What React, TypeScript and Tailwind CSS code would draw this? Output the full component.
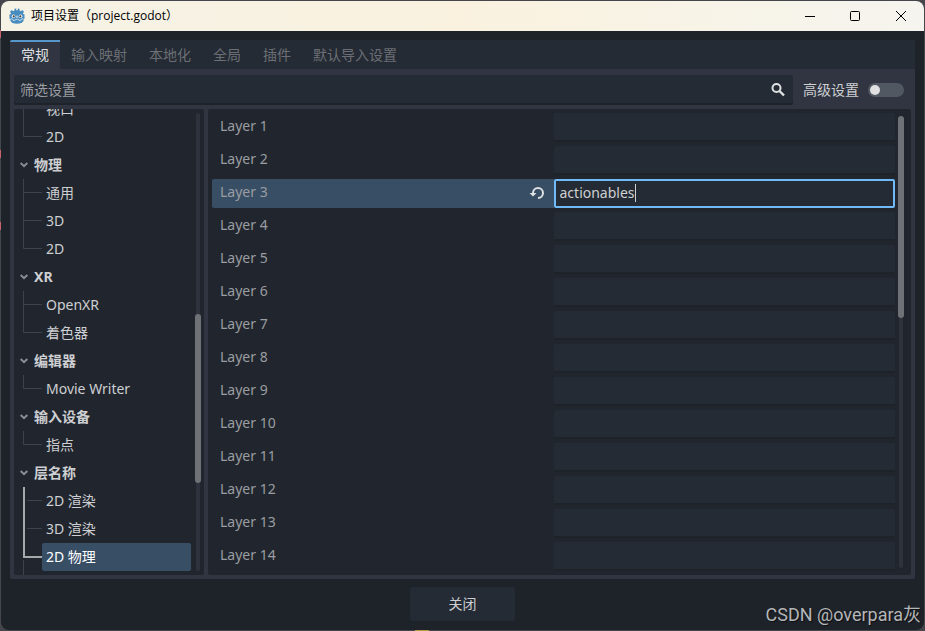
import { useState } from "react";
import type { ReactElement } from "react";
import { clsx } from "clsx";

interface TreeGroup {
  name: string;
  items: string[];
  // The guide line runs on below the last item
  continues?: boolean;
}

const TABS = ["常规", "输入映射", "本地化", "全局", "插件", "默认导入设置"];

const GROUPS: TreeGroup[] = [
  { name: "", items: ["视口", "2D"] },
  { name: "物理", items: ["通用", "3D", "2D"] },
  { name: "XR", items: ["OpenXR", "着色器"] },
  { name: "编辑器", items: ["Movie Writer"] },
  { name: "输入设备", items: ["指点"] },
  { name: "层名称", items: ["2D 渲染", "3D 渲染", "2D 物理"], continues: true },
];

const LAYERS = Array.from({ length: 14 }, (_, i) => `Layer ${i + 1}`);
const ACTIVE_LAYER = 2;

function GodotLogo(): ReactElement {
  return (
    <svg width="16" height="16" viewBox="0 0 16 16" aria-hidden="true">
      <path
        fill="#478cbf"
        d="M5.600.8 7.200.4v1.900h1.600V.4l1.600.4.4 1.900 1 .6 1.500-1.200 1.700 1.700-1 1.500.4.9H15.500v4.500l-.8.3v1.200c-.5 2.400-3.300 3.600-6.700 3.600s-6.200-1.200-6.700-3.600v-1.200l-.8-.3V6.200H1.600l.4-.9L1 3.800l1.700-1.700 1.500 1.200 1-.6z"
      />
      <circle cx="4.500" cy="8.200" r="1.800" fill="#fff" />
      <circle cx="11.500" cy="8.200" r="1.800" fill="#fff" />
      <circle cx="4.700" cy="8.300" r="1.100" fill="#414042" />
      <circle cx="11.300" cy="8.300" r="1.100" fill="#414042" />
      <path stroke="#fff" strokeLinecap="round" d="M8 8v1.500" />
      <path fill="none" stroke="#d6e5f0" strokeWidth=".8" d="M1.300 11h2.400l.4 1.400h2l.4-1.100h3l.4 1.100h2l.4-1.400h2.400" />
    </svg>
  );
}

function TitleBar(): ReactElement {
  return (
    <header className="flex h-[30px] shrink-0 items-center bg-linear-to-r from-[#f5f2e6] via-[#faf2df] to-[#f5f4ee] pl-2 text-black">
      <GodotLogo />
      <h1 className="ml-1.5 flex-1 font-['Open_Sans','Noto_Sans_CJK_SC',sans-serif] text-xs">项目设置（project.godot）</h1>
      <button type="button" aria-label="最小化" className="flex h-full w-11 items-center justify-center">
        <svg width="10" height="10" stroke="currentColor"><path d="M0 5.500h10" /></svg>
      </button>
      <button type="button" aria-label="最大化" className="flex h-full w-[46px] items-center justify-center">
        <svg width="10" height="10" fill="none" stroke="currentColor"><rect x=".5" y=".5" width="9" height="9" rx="1" /></svg>
      </button>
      <button type="button" aria-label="关闭窗口" className="flex h-full w-[46px] items-center justify-center">
        <svg width="10" height="10" stroke="currentColor"><path d="m0 0 10 10M10 0 0 10" /></svg>
      </button>
    </header>
  );
}

interface TreeProps {
  selected: string;
  onSelect: (key: string) => void;
}

// Section tree. The guide line to the selected item is drawn thick.
function SectionTree({ selected, onSelect }: TreeProps): ReactElement {
  return (
    <nav className="min-w-0 flex-1 overflow-hidden">
      <div className="-mt-3.5">
        {GROUPS.map((group) => {
          const active = group.items.findIndex((item) => `${group.name}/${item}` === selected);
          return (
            <section key={group.name}>
              {group.name && (
                <button type="button" className="flex h-7 w-full items-center pl-1.5 font-bold text-[#cdcfd2]">
                  <svg width="8" height="6" fill="none" stroke="#8a8d91" strokeWidth="2" aria-hidden="true">
                    <path d="M.7 1 4 4.200 7.300 1" />
                  </svg>
                  <span className="ml-1.5">{group.name}</span>
                </button>
              )}
              <ul>
                {group.items.map((item, i) => {
                  const last = i === group.items.length - 1;
                  return (
                    <li key={item} className="flex h-7 pl-[9px]">
                      <svg width="19" height="28" className="shrink-0" aria-hidden="true">
                        {i > active && (
                          <path d={last ? "M.5 0V13.500H19" : "M.5 0V28M.5 13.500H19"} fill="none" stroke="#3e434b" />
                        )}
                        {i < active && <path d="M4 13.500H19" stroke="#3e434b" />}
                        {i < active && <path d="M1 0V28" stroke="#a6a9ac" strokeWidth="2" />}
                        {i === active && <path d="M1 0V14H19" fill="none" stroke="#a6a9ac" strokeWidth="2" />}
                        {i === active && group.continues && <path d="M.5 17V28" stroke="#3e434b" />}
                      </svg>
                      <button
                        type="button"
                        onClick={() => onSelect(`${group.name}/${item}`)}
                        className={clsx(
                          "flex-1 rounded-xs px-1 text-left",
                          i === active ? "bg-[#384e65] text-white" : "text-[#cdcfd2]"
                        )}
                      >
                        {item}
                      </button>
                    </li>
                  );
                })}
              </ul>
              {group.continues && <div className="ml-[9px] h-7 border-l border-[#3e434b]" />}
            </section>
          );
        })}
      </div>
    </nav>
  );
}

function LayerRow({ label, active }: { label: string; active: boolean }): ReactElement {
  const [value, setValue] = useState(active ? "actionables" : "");
  return (
    <div className="flex h-[29px] shrink-0">
      <label
        htmlFor={label}
        className={clsx("flex w-1/2 items-center rounded-l-xs pb-1 pl-2 text-[#9a9da1]", active && "bg-[#384e65]")}
      >
        {label}
      </label>
      <div className="relative flex w-1/2">
        {active && (
          <button type="button" aria-label="重置" className="absolute right-full top-1.5 mr-[9px]">
            <svg width="16" height="16" viewBox="0 0 16 16" aria-hidden="true">
              <path fill="#dfe1e3" d="M9 2a6 6 0 0 0-6 6H.5L4 11.500 7.500 8H5a4 4 0 1 1 4 4v2A6 6 0 0 0 9 2z" />
            </svg>
          </button>
        )}
        <input
          id={label}
          type="text"
          value={value}
          onChange={(e) => setValue(e.target.value)}
          className={clsx(
            "w-full rounded-xs bg-[#252b34] text-[#cdcfd2] caret-transparent outline-none",
            active ? "border-2 border-[#70bafa] px-1 pb-0.5" : "border-b-2 border-[#1e2229] px-1.5"
          )}
        />
        {active && <span className="absolute left-[81px] top-[5px] h-[18px] w-px bg-[#cdcfd2]" />}
      </div>
    </div>
  );
}

export default function App(): ReactElement {
  const [tab, setTab] = useState(0);
  const [selected, setSelected] = useState("层名称/2D 物理");

  return (
    <div className="relative h-screen overflow-hidden bg-[#45464c] p-px font-['Noto_Sans','Noto_Sans_CJK_SC',sans-serif] text-sm">
      {/* Slivers of the editor behind the dialog */}
      <span className="absolute left-0 top-[30px] h-2 w-px bg-[#c4626f]" />
      <span className="absolute left-0 top-[150px] h-2 w-px bg-[#c4626f]" />
      <span className="absolute left-0 top-[222px] h-2 w-px bg-[#c4626f]" />
      <span className="absolute bottom-0 left-[415px] h-px w-3.5 bg-[#b39a3e]" />

      <div className="flex h-full flex-col overflow-hidden rounded-lg bg-[#1e2229]">
        <TitleBar />

        <main className="mx-[9px] mt-[9px] flex min-h-0 flex-1 flex-col overflow-hidden rounded-xs bg-[#303541]">
          <div role="tablist" className="flex h-[29px] shrink-0 bg-[#252b34]">
            {TABS.map((name, i) => (
              <button
                key={name}
                type="button"
                role="tab"
                aria-selected={i === tab}
                onClick={() => setTab(i)}
                className={clsx(
                  "border-t-2 px-[11px] pb-0.5",
                  i === tab ? "border-[#5696cb] bg-[#303541] text-[#dfe0e2]" : "border-transparent text-[#6b6f75]"
                )}
              >
                {name}
              </button>
            ))}
          </div>

          <div className="flex h-10 shrink-0 items-center pl-1 pr-[11px] pt-0.5">
            <div className="flex h-[30px] flex-1 items-center rounded-xs bg-[#252b34] pl-1.5 pr-[7px] shadow-[inset_0_-2px_#1e2229]">
              <input
                type="search"
                aria-label="筛选设置"
                placeholder="筛选设置"
                className="min-w-0 flex-1 bg-transparent text-[#cdcfd2] outline-none placeholder:text-[#9a9da1]"
              />
              <svg width="16" height="16" viewBox="0 0 16 16" fill="none" stroke="#dfe1e3" strokeWidth="2" aria-hidden="true">
                <circle cx="6.500" cy="6" r="4" />
                <path d="m9.500 9 4.500 4.500" strokeWidth="2.400" />
              </svg>
            </div>
            <label className="ml-2.5 flex items-center gap-[9px] text-[#cdcfd2]">
              高级设置
              <input
                type="checkbox"
                className="flex h-3.5 w-9 appearance-none items-center rounded-full bg-[#515861] px-0.5 before:size-2.5 before:rounded-full before:bg-[#e0e0e0] checked:justify-end"
              />
            </label>
          </div>

          <div className="flex min-h-0 flex-1 gap-1 px-1 pb-1">
            <div className="flex w-[190px] shrink-0 overflow-hidden rounded-xs bg-[#21262e]">
              <SectionTree selected={selected} onSelect={setSelected} />
              <div className="my-1 ml-1 mr-[3px] flex w-1.5 flex-col items-center">
                <div className="h-[201px] w-1 rounded-t-full bg-[#2d323c]" />
                <div className="h-[169px] w-1.5 rounded-full bg-[#6e7176]" />
                <div className="w-1 flex-1 rounded-b-full bg-[#2d323c]" />
              </div>
            </div>

            <div className="flex min-w-0 flex-1 overflow-hidden rounded-xs bg-[#21262e] p-1">
              <div className="flex min-w-0 flex-1 flex-col gap-1">
                {LAYERS.map((label, i) => (
                  <LayerRow key={label} label={label} active={i === ACTIVE_LAYER} />
                ))}
              </div>
              <div className="my-[3px] ml-[3px] mr-[3px] flex w-1.5 flex-col items-center">
                <div className="h-[202px] w-1.5 rounded-full bg-[#6e7176]" />
                <div className="w-1 flex-1 rounded-b-full bg-[#2d323c]" />
              </div>
            </div>
          </div>
        </main>

        <footer className="flex h-[51px] shrink-0 justify-center pt-2">
          <button type="button" className="h-[34px] w-[105px] rounded-xs bg-[#252b34] text-[#cdcfd2]">
            关闭
          </button>
        </footer>
      </div>

      <p className="absolute bottom-1 right-1 font-[Roboto,'Noto_Sans_CJK_SC',sans-serif] text-lg leading-6 text-[#b4b6b8] text-shadow-[1px_1px_1px_#0008]">
        CSDN @overpara灰
      </p>
    </div>
  );
}
